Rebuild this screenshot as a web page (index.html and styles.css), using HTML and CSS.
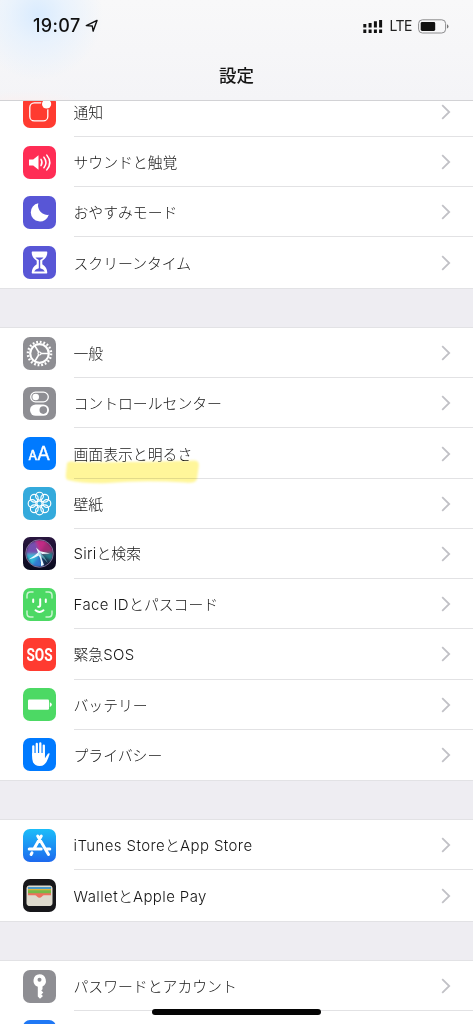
FILE: index.html
```html
<!DOCTYPE html>
<html lang="ja">
<head>
<meta charset="utf-8">
<title>設定</title>
<link rel="stylesheet" href="styles.css">
</head>
<body>
<div class="screen">
<header class="header">
  <div class="status">
    <div class="clock"><span class="time">19:07</span><svg class="loc" width="14" height="14" viewBox="0 0 14 14"><path d="M1.3 6.6 12 1.4 8.1 12.2 7.3 7Z" fill="none" stroke="#111" stroke-width="1.4" stroke-linejoin="round"/></svg></div>
    <div class="signals">
      <svg width="20" height="15" viewBox="0 0 20 15" fill="#111"><path d="M.3 5h3v3.4h-3zM5.6 4h3v4.4h-3zM10.9 2.3h3v6.1h-3zM16.1 1h3v7.4h-3zM.3 10.6h3v3.3h-3zM5.6 10.6h3v3.3h-3zM10.9 10.6h3v3.3h-3zM16.1 10.6h3v3.3h-3z"/></svg>
      <span class="lte">LTE</span>
      <svg width="31" height="15" viewBox="0 0 31 15"><rect x=".6" y=".8" width="27" height="13.2" rx="3.8" fill="none" stroke="#8c8c8e"/><rect x="2.7" y="3" width="14.5" height="9" rx="1.4" fill="#111"/><path d="M29 5.2q1.5.8 1.5 2.2T29 9.6z" fill="#777"/></svg>
    </div>
  </div>
  <h1 class="title">設定</h1>
</header>
<main class="list">
  <section class="group">
    <div class="row"><svg class="icon" viewBox="0 0 33 33"><rect width="33" height="33" rx="7" fill="#ff3b30"/><rect x="6.8" y="7.900" width="18" height="18" rx="4.5" fill="none" stroke="#fff" stroke-width="1.3"/><circle cx="23.6" cy="9" r="5.6" fill="#ff3b30"/><circle cx="23.6" cy="9" r="4.6" fill="#fff"/></svg><div class="cell"><span class="label">通知</span><svg class="chev" viewBox="0 0 10 16"><path d="m1.2 1.2 7 6.8-7 6.8"/></svg></div></div>
    <div class="row"><svg class="icon" viewBox="0 0 33 33"><rect width="33" height="33" rx="7" fill="#ff2d55"/><path d="M6 13.4h4.2l5.3-4.1v14.4l-5.3-4.1H6z" fill="#fff"/><path d="M18 13.4q2 3.1 0 6.2M20.9 11.2q4 5.3 0 10.6M23.8 9.1q6 7.4 0 14.8" fill="none" stroke="#fff" stroke-width="1.5" stroke-linecap="round"/></svg><div class="cell"><span class="label">サウンドと触覚</span><svg class="chev" viewBox="0 0 10 16"><path d="m1.2 1.2 7 6.8-7 6.8"/></svg></div></div>
    <div class="row"><svg class="icon" viewBox="0 0 33 33"><rect width="33" height="33" rx="7" fill="#5856d6"/><path d="M15.3 7.2A9.2 9.2 0 1 0 25.8 18.8 9.5 9.5 0 0 1 15.3 7.2Z" fill="#fff"/></svg><div class="cell"><span class="label">おやすみモード</span><svg class="chev" viewBox="0 0 10 16"><path d="m1.2 1.2 7 6.8-7 6.8"/></svg></div></div>
    <div class="row"><svg class="icon" viewBox="0 0 33 33"><rect width="33" height="33" rx="7" fill="#5856d6"/><path d="M9.4 5.5h14.2q.7 0 .7.8 0 5.200-5 8.500v3.400q5 3.300 5 8.500 0 .8-.7.8H9.400q-.7 0-.7-.8 0-5.200 5-8.500v-3.400q-5-3.300-5-8.500 0-.8.700-.8Z" fill="#fff"/><path d="M12.500 11.600h8q-.7 1.400-3.300 2.300v8.300q3.700.8 4.600 3.200H11.200q.9-2.400 4.600-3.200v-8.300q-2.600-.9-3.300-2.300Z" fill="#5856d6"/></svg><div class="cell"><span class="label">スクリーンタイム</span><svg class="chev" viewBox="0 0 10 16"><path d="m1.2 1.2 7 6.8-7 6.8"/></svg></div></div>
  </section>
  <section class="group">
    <div class="row"><svg class="icon" viewBox="0 0 33 33"><rect width="33" height="33" rx="7" fill="#8e8e93"/><g fill="none" stroke="#fff"><circle cx="16.500" cy="16.500" r="11.600" stroke-width="2.400" stroke-dasharray="1.820 1.820"/><circle cx="16.500" cy="16.500" r="9.300" stroke-width="2.200"/><path d="M17 16.500h9M16.500 16.500l-5-8.400M16.500 16.500l-5 8.400" stroke-width="1.600"/><circle cx="16.500" cy="16.500" r="1.500" fill="#8e8e93" stroke-width="1.200"/></g></svg><div class="cell"><span class="label">一般</span><svg class="chev" viewBox="0 0 10 16"><path d="m1.2 1.2 7 6.8-7 6.8"/></svg></div></div>
    <div class="row"><svg class="icon" viewBox="0 0 33 33"><rect width="33" height="33" rx="7" fill="#8e8e93"/><rect x="7.700" y="5.200" width="17.600" height="9.600" rx="4.800" fill="none" stroke="#fff" stroke-width="1.300"/><circle cx="12.700" cy="10" r="3.300" fill="#fff"/><rect x="7" y="17.400" width="19" height="11.400" rx="5.700" fill="#fff"/><circle cx="20.300" cy="23.100" r="3.800" fill="#8e8e93"/></svg><div class="cell"><span class="label">コントロールセンター</span><svg class="chev" viewBox="0 0 10 16"><path d="m1.2 1.2 7 6.8-7 6.8"/></svg></div></div>
    <div class="row marked"><svg class="icon" viewBox="0 0 33 33"><rect width="33" height="33" rx="7" fill="#007aff"/><text class="aa" x="5.400" y="22.600" font-size="12.500" stroke-width=".6">A</text><text class="aa" x="14.100" y="22.600" font-size="19" stroke-width=".3">A</text></svg><div class="cell"><span class="label">画面表示と明るさ</span><svg class="chev" viewBox="0 0 10 16"><path d="m1.2 1.2 7 6.8-7 6.8"/></svg></div>
      <svg class="marker" viewBox="0 0 138 32"><path d="M4 7Q7 4 12 6Q70 7 132 4.500Q137 5 135.500 12L134 23Q132 28 122 26.500Q80 24 45 27Q22 28 5 24Q2 23 3 17Z"/></svg></div>
    <div class="row"><svg class="icon" viewBox="0 0 33 33"><rect width="33" height="33" rx="7" fill="#34aadc"/><g fill="none" stroke="#fff" stroke-width="1.150"><circle cx="16.500" cy="9.100" r="3.900"/><circle cx="21.730" cy="11.270" r="3.900"/><circle cx="23.900" cy="16.500" r="3.900"/><circle cx="21.730" cy="21.730" r="3.900"/><circle cx="16.500" cy="23.900" r="3.900"/><circle cx="11.270" cy="21.730" r="3.900"/><circle cx="9.100" cy="16.500" r="3.900"/><circle cx="11.270" cy="11.270" r="3.900"/><circle cx="16.500" cy="16.500" r="2.600"/></g></svg><div class="cell"><span class="label">壁紙</span><svg class="chev" viewBox="0 0 10 16"><path d="m1.2 1.2 7 6.8-7 6.8"/></svg></div></div>
    <div class="row"><svg class="icon" viewBox="0 0 33 33"><defs><linearGradient id="sb" x2="0" y2="1"><stop stop-color="#29163f"/><stop offset="1" stop-color="#080a1d"/></linearGradient><filter id="soft" x="-20%" y="-20%" width="140%" height="140%"><feGaussianBlur stdDeviation="1.500"/></filter><clipPath id="orb"><circle cx="16.500" cy="16.500" r="13.300"/></clipPath></defs><rect width="33" height="33" rx="7" fill="url(#sb)"/><g clip-path="url(#orb)"><g filter="url(#soft)"><path d="M17 17 2 17 5 6 17 2Z" fill="#7550b0"/><path d="M17 17 12 2 25 3Z" fill="#c32b85"/><path d="M17 17 24 3 32 14Z" fill="#a12a75"/><path d="M17 17 31 15 30 25Z" fill="#217e8e"/><path d="M17 17 30 24 18 31Z" fill="#182b48"/><path d="M17 17 20 31 6 30Z" fill="#3278cf"/><path d="M17 17 8 29 2 17Z" fill="#31b9d9"/></g><path d="M17.500 15.500Q18.500 23 21 28L18 29Q18.500 23 15.800 18.500Q12 21 5.500 22.500Q12 18.500 15 15.500L13 10.500L17.200 14.300L27 16.500L19 17Z" fill="#e9f8ff"/><path d="M17 15Q22 20 25 26Q19 20 15 17Z" fill="#80d7e0" opacity=".6"/></g><circle cx="16.500" cy="16.500" r="13.800" fill="none" stroke="#9b86b2" stroke-width=".8"/></svg><div class="cell"><span class="label"><span class="latin siri">Siri</span>と検索</span><svg class="chev" viewBox="0 0 10 16"><path d="m1.2 1.2 7 6.8-7 6.8"/></svg></div></div>
    <div class="row"><svg class="icon" viewBox="0 0 33 33"><rect width="33" height="33" rx="7" fill="#4cd964"/><g fill="none" stroke="#fff" stroke-linecap="round"><path d="M4 10V7.500Q4 4 7.500 4H10M23 4h2.500Q29 4 29 7.500V10M29 23v2.500Q29 29 25.500 29H23M10 29H7.500Q4 29 4 25.500V23" stroke-width="1.500" opacity=".7"/><path d="M10.200 11.500v2.500M22.800 11.500v2.500M17.200 11.300v6q0 1.600-2 1.500M12.500 22.300q4 3.400 8 0" stroke-width="2"/></g></svg><div class="cell"><span class="label"><span class="latin">Face ID</span>とパスコード</span><svg class="chev" viewBox="0 0 10 16"><path d="m1.2 1.2 7 6.8-7 6.8"/></svg></div></div>
    <div class="row"><svg class="icon" viewBox="0 0 33 33"><rect width="33" height="33" rx="7" fill="#ff3b30"/><text class="sos" transform="translate(16.500 22.800) scale(.78 1)" text-anchor="middle">SOS</text></svg><div class="cell"><span class="label">緊急<span class="latin">SOS</span></span><svg class="chev" viewBox="0 0 10 16"><path d="m1.2 1.2 7 6.8-7 6.8"/></svg></div></div>
    <div class="row"><svg class="icon" viewBox="0 0 33 33"><rect width="33" height="33" rx="7" fill="#4cd964"/><rect x="5" y="11.400" width="21" height="10.300" rx="1.200" fill="#fff"/><path d="M26.800 14.300q2 .6 2 2.300t-2 2.300z" fill="#fff"/></svg><div class="cell"><span class="label">バッテリー</span><svg class="chev" viewBox="0 0 10 16"><path d="m1.2 1.2 7 6.8-7 6.8"/></svg></div></div>
    <div class="row"><svg class="icon" viewBox="0 0 33 33"><rect width="33" height="33" rx="7" fill="#007aff"/><path d="M10.300 17V8.300M13.800 15V6M17.300 15V5.500M20.800 16V7.600" stroke="#fff" stroke-width="2.300" stroke-linecap="round"/><path d="M9.150 15h12.800v5.200l2.900-4.500q1-1 1.900-.2-.5 1.800-1.600 4.700-1.600 4.500-4.200 6.600-1.200 1.300-4.500 1.300-4.600 0-6.500-4.200-1.200-2.800-.8-8.900z" fill="#fff"/></svg><div class="cell"><span class="label">プライバシー</span><svg class="chev" viewBox="0 0 10 16"><path d="m1.2 1.2 7 6.8-7 6.8"/></svg></div></div>
  </section>
  <section class="group">
    <div class="row"><svg class="icon" viewBox="0 0 33 33"><defs><linearGradient id="as" x2="0" y2="1"><stop stop-color="#1bbdf9"/><stop offset="1" stop-color="#1d69ee"/></linearGradient></defs><rect width="33" height="33" rx="7" fill="url(#as)"/><g fill="none" stroke="#fff" stroke-width="3" stroke-linecap="round"><path d="M18.300 7 11.300 19.300M14.700 7l10.800 18.500M6.200 20h12M23.500 20h3.300M9 23.800l-.9 1.600"/></g></svg><div class="cell"><span class="label"><span class="latin">iTunes Store</span>と<span class="latin">App Store</span></span><svg class="chev" viewBox="0 0 10 16"><path d="m1.2 1.2 7 6.8-7 6.8"/></svg></div></div>
    <div class="row"><svg class="icon" viewBox="0 0 33 33"><defs><clipPath id="card"><rect x="4" y="7" width="25" height="19.500" rx="2"/></clipPath></defs><rect width="33" height="33" rx="7" fill="#17171a"/><g clip-path="url(#card)"><path fill="#dedbce" d="M4 7h25v20H4z"/><path fill="#4a99c7" d="M5 8h23v3H5z"/><path fill="#d9b43c" d="M5 9.900h23v2H5z"/><path fill="#77b846" d="M5 11.300h23v4H5z"/><path fill="#ed705d" d="M5 14.300h23v2h-7q-1 0-2 1.200-2.500 2.500-5 0-1-1.200-2-1.200H5z"/></g><rect x="4" y="7" width="25" height="19.500" rx="2" fill="none" stroke="#dedbce"/></svg><div class="cell"><span class="label"><span class="latin wallet">Wallet</span>と<span class="latin wallet">Apple Pay</span></span><svg class="chev" viewBox="0 0 10 16"><path d="m1.2 1.2 7 6.8-7 6.8"/></svg></div></div>
  </section>
  <section class="group">
    <div class="row"><svg class="icon" viewBox="0 0 33 33"><rect width="33" height="33" rx="7" fill="#8e8e93"/><path fill="#fff" fill-rule="evenodd" d="M16.500 4.200a6.500 6.500 0 0 1 3 12.200v2.800l-1.200 1.300 2 1.900-2 2 1.700 1.700-3 2.600-2.200-2.100V16.800a6.500 6.500 0 0 1 1.700-12.600Zm0 3.600a2 2 0 1 0 0 4 2 2 0 0 0 0-4Z"/></svg><div class="cell"><span class="label">パスワードとアカウント</span><svg class="chev" viewBox="0 0 10 16"><path d="m1.2 1.2 7 6.8-7 6.8"/></svg></div></div>
    <div class="row"><svg class="icon" viewBox="0 0 33 33"><rect width="33" height="33" rx="7" fill="#1f78f5"/></svg><div class="cell"></div></div>
  </section>
</main>
<div class="home"></div>
</div>
</body>
</html>
```
FILE: styles.css
```css
* { box-sizing: border-box; }
body { margin: 0; background: #fff; }
.screen {
  position: relative;
  width: 474px;
  height: 1024px;
  overflow: hidden;
  padding-right: 1px;
  background: #fff;
  font-family: "Noto Sans CJK JP", sans-serif;
  color: #161616;
}
.header {
  position: relative;
  z-index: 1;
  height: 101px;
  border-bottom: 1px solid #d2d2d5;
  background:
    radial-gradient(circle at 38px 15px, rgba(214, 234, 255, .9) 0, rgba(224, 239, 255, .6) 28px, rgba(244, 246, 250, 0) 65px),
    radial-gradient(ellipse at 25px 105px, #fbf0f0 0, rgba(247, 245, 247, 0) 60px),
    linear-gradient(#f8f8f9, #f4f4f7);
}
.status {
  display: flex;
  justify-content: space-between;
  align-items: center;
  height: 52px;
  padding: 0 24px 0 33px;
}
.clock { display: flex; align-items: center; gap: 4px; }
.time { font: 500 18px/20px Inter, sans-serif; letter-spacing: .35px; color: #111; }
.signals { display: flex; align-items: center; gap: 6px; }
.lte { font: 400 14px/16px Inter, sans-serif; letter-spacing: -.5px; color: #222; }
.title {
  margin: 10px 0 0;
  text-align: center;
  font-size: 17.500px;
  line-height: 26px;
  font-weight: 500;
}
.list {
  display: flex;
  flex-direction: column;
  gap: 40.300px;
  margin-top: -14.200px;
  background: #eeedf2;
}
.group { background: #fff; box-shadow: 0 -1px #e2e2e5, 0 1px #e2e2e5; }
.row {
  position: relative;
  display: flex;
  align-items: center;
  gap: 17.500px;
  height: 50.230px;
  padding-left: 23px;
}
.icon { flex: none; width: 33px; height: 33px; overflow: visible; }
.cell {
  flex: 1;
  display: flex;
  align-items: center;
  justify-content: space-between;
  height: 100%;
  padding: 1px 22.500px 0 0;
  border-bottom: 1px solid #e2e2e4;
}
.row:last-child .cell { border-bottom: 0; }
.label { font-size: 14.850px; line-height: 22px; font-weight: 300; white-space: nowrap; }
.latin { font-family: Inter, sans-serif; font-weight: 300; font-size: 15px; letter-spacing: .4px; }
.siri { letter-spacing: .25px; }
.wallet { letter-spacing: .4px; }
.chev { width: 10px; height: 16px; fill: none; stroke: #c1c1c6; stroke-width: 1.800; }
.marker {
  position: absolute;
  left: 63px;
  top: 28px;
  width: 138px;
  height: 32px;
  z-index: 1;
  fill: #fff69a;
  mix-blend-mode: multiply;
  filter: blur(1px);
}
.aa { font-family: Inter, sans-serif; fill: #fff; stroke: #fff; }
.sos { font: 700 17.500px Roboto, sans-serif; fill: #fff; }
.home {
  position: absolute;
  z-index: 2;
  left: 152px;
  top: 1009px;
  width: 169px;
  height: 6px;
  border-radius: 3px;
  background: #050505;
}
```
